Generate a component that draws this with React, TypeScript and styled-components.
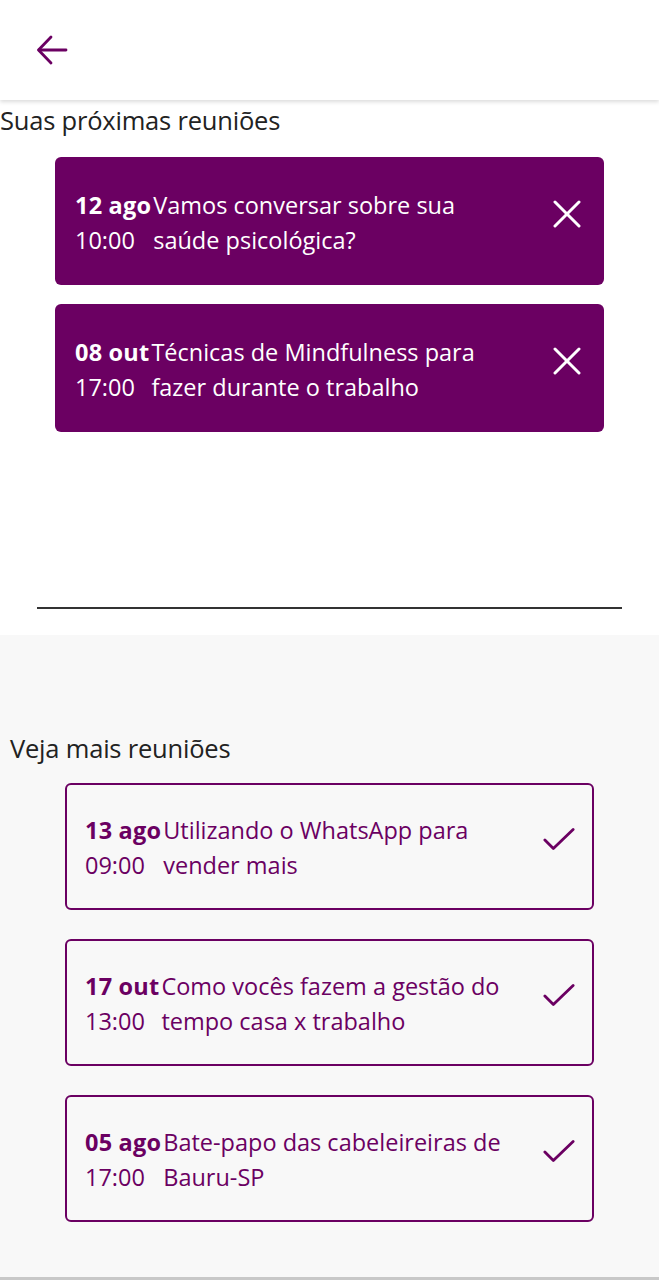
import React from 'react';
import styled, { createGlobalStyle } from 'styled-components';

const PURPLE = '#6b0062';

const GlobalStyle = createGlobalStyle`
  html, body {
    margin: 0;
    padding: 0;
    background: #fff;
  }
  body {
    font-family: 'Open Sans', 'Noto Sans', sans-serif;
    color: #222;
  }
  * { box-sizing: border-box; }
`;

const Page = styled.div`
  min-height: 100vh;
  display: flex;
  flex-direction: column;
`;

const Header = styled.header`
  height: 100px;
  flex-shrink: 0;
  display: flex;
  align-items: center;
  padding-left: 35px;
  background: #fff;
  box-shadow: 0 2px 4px rgba(0, 0, 0, 0.14);
  position: relative;
  z-index: 1;
`;

const BackButton = styled.button`
  border: 0;
  background: none;
  padding: 0;
  width: 34px;
  height: 34px;
  display: flex;
  align-items: center;
  justify-content: center;
  cursor: pointer;
`;

const Upcoming = styled.section`
  padding-top: 5px;
  background: #fff;
  padding-bottom: 26px;
`;

const Heading = styled.h2<{ $indent: number }>`
  margin: 0;
  padding-left: ${p => p.$indent}px;
  font-size: 25.5px;
  line-height: 30px;
  font-weight: 400;
  color: #222;
  letter-spacing: -0.2px;
`;

const CardList = styled.div<{ $width: number; $gap: number; $top: number }>`
  width: ${p => p.$width}px;
  margin: ${p => p.$top}px auto 0;
  display: flex;
  flex-direction: column;
  gap: ${p => p.$gap}px;
`;

const Card = styled.div<{ $outlined?: boolean }>`
  height: ${p => (p.$outlined ? 127 : 128)}px;
  display: flex;
  align-items: center;
  padding: 3px ${p => (p.$outlined ? 17 : 21)}px 0 ${p => (p.$outlined ? 18 : 20)}px;
  border-radius: 6px;
  background: ${p => (p.$outlined ? 'transparent' : PURPLE)};
  border: ${p => (p.$outlined ? `2px solid ${PURPLE}` : 'none')};
  color: ${p => (p.$outlined ? PURPLE : '#fff')};
  font-size: 23.5px;
  line-height: 35px;
`;

const DateCol = styled.div`
  display: flex;
  flex-direction: column;
  flex-shrink: 0;
  padding-right: 2px;
`;

const Day = styled.span`
  font-weight: 700;
  letter-spacing: 0.2px;
`;

const Title = styled.div`
  flex: 1;
  white-space: pre-line;
`;

const IconButton = styled.button`
  border: 0;
  background: none;
  padding: 0;
  width: 32px;
  height: 32px;
  display: flex;
  align-items: center;
  justify-content: center;
  color: inherit;
  cursor: pointer;
  margin-top: -18px;
`;

const Divider = styled.hr`
  width: 585px;
  margin: 175px auto 0;
  border: 0;
  border-top: 2px solid #333;
`;

const More = styled.section`
  flex: 1;
  background: #f8f8f8;
  padding-top: 98px;
  border-bottom: 3px solid #c8c8c8;
`;

type Meeting = { day: string; time: string; title: string };

const upcoming: Meeting[] = [
  { day: '12 ago', time: '10:00', title: 'Vamos conversar sobre sua\nsaúde psicológica?' },
  { day: '08 out', time: '17:00', title: 'Técnicas de Mindfulness para\nfazer durante o trabalho' },
];

const others: Meeting[] = [
  { day: '13 ago', time: '09:00', title: 'Utilizando o WhatsApp para\nvender mais' },
  { day: '17 out', time: '13:00', title: 'Como vocês fazem a gestão do\ntempo casa x trabalho' },
  { day: '05 ago', time: '17:00', title: 'Bate-papo das cabeleireiras de\nBauru-SP' },
];

const ArrowLeft = () => (
  <svg width="32" height="30" viewBox="0 0 32 30" fill="none" stroke={PURPLE} strokeWidth="2.8" strokeLinecap="round" strokeLinejoin="round">
    <path d="M30 15H3" />
    <path d="M15 2L2.5 15L15 28" />
  </svg>
);

const CloseIcon = () => (
  <svg width="28" height="28" viewBox="0 0 28 28" fill="none" stroke="currentColor" strokeWidth="3" strokeLinecap="round">
    <path d="M2 2L26 26" />
    <path d="M26 2L2 26" />
  </svg>
);

const CheckIcon = () => (
  <svg width="34" height="26" viewBox="0 0 34 26" fill="none" stroke="currentColor" strokeWidth="3" strokeLinecap="round" strokeLinejoin="round">
    <path d="M2 14L11 23L32 3" />
  </svg>
);

const MeetingCard = ({ meeting, outlined }: { meeting: Meeting; outlined?: boolean }) => (
  <Card $outlined={outlined}>
    <DateCol>
      <Day>{meeting.day}</Day>
      <span>{meeting.time}</span>
    </DateCol>
    <Title>{meeting.title}</Title>
    <IconButton aria-label={outlined ? 'Confirmar' : 'Cancelar'}>
      {outlined ? <CheckIcon /> : <CloseIcon />}
    </IconButton>
  </Card>
);

const App = () => (
  <>
    <GlobalStyle />
    <Page>
      <Header>
        <BackButton aria-label="Voltar">
          <ArrowLeft />
        </BackButton>
      </Header>
      <Upcoming>
        <Heading $indent={0}>Suas próximas reuniões</Heading>
        <CardList $width={549} $gap={19} $top={22}>
          {upcoming.map(m => (
            <MeetingCard key={m.day + m.time} meeting={m} />
          ))}
        </CardList>
        <Divider />
      </Upcoming>
      <More>
        <Heading $indent={10}>Veja mais reuniões</Heading>
        <CardList $width={529} $gap={29} $top={20}>
          {others.map(m => (
            <MeetingCard key={m.day + m.time} meeting={m} outlined />
          ))}
        </CardList>
      </More>
    </Page>
  </>
);

export default App;
